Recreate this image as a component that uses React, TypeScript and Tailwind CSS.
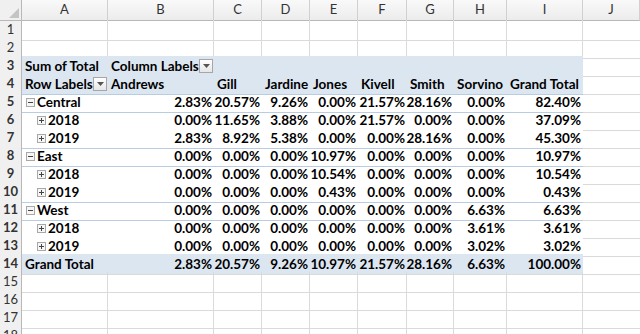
import React from 'react'

const cols = ['A', 'B', 'C', 'D', 'E', 'F', 'G', 'H', 'I', 'J']
const names = ['Andrews', 'Gill', 'Jardine', 'Jones', 'Kivell', 'Smith', 'Sorvino', 'Grand Total']

type Kind = 'region' | 'year' | 'total'
type Line = { label: string; kind: Kind; values: string[]; lineBelow?: boolean }

const lines: Line[] = [
  { label: 'Central', kind: 'region', values: ['2.83%', '20.57%', '9.26%', '0.00%', '21.57%', '28.16%', '0.00%', '82.40%'], lineBelow: true },
  { label: '2018', kind: 'year', values: ['0.00%', '11.65%', '3.88%', '0.00%', '21.57%', '0.00%', '0.00%', '37.09%'] },
  { label: '2019', kind: 'year', values: ['2.83%', '8.92%', '5.38%', '0.00%', '0.00%', '28.16%', '0.00%', '45.30%'], lineBelow: true },
  { label: 'East', kind: 'region', values: ['0.00%', '0.00%', '0.00%', '10.97%', '0.00%', '0.00%', '0.00%', '10.97%'], lineBelow: true },
  { label: '2018', kind: 'year', values: ['0.00%', '0.00%', '0.00%', '10.54%', '0.00%', '0.00%', '0.00%', '10.54%'] },
  { label: '2019', kind: 'year', values: ['0.00%', '0.00%', '0.00%', '0.43%', '0.00%', '0.00%', '0.00%', '0.43%'], lineBelow: true },
  { label: 'West', kind: 'region', values: ['0.00%', '0.00%', '0.00%', '0.00%', '0.00%', '0.00%', '6.63%', '6.63%'], lineBelow: true },
  { label: '2018', kind: 'year', values: ['0.00%', '0.00%', '0.00%', '0.00%', '0.00%', '0.00%', '3.61%', '3.61%'] },
  { label: '2019', kind: 'year', values: ['0.00%', '0.00%', '0.00%', '0.00%', '0.00%', '0.00%', '3.02%', '3.02%'] },
  { label: 'Grand Total', kind: 'total', values: ['2.83%', '20.57%', '9.26%', '10.97%', '21.57%', '28.16%', '6.63%', '100.00%'] },
]

const grid = 'grid grid-cols-[22px_86px_106px_48px_48px_48px_49px_47px_53px_76px_57px]'

function RowNum({ n }: { n: number }) {
  return (
    <div className="flex items-center justify-center bg-[#f0f0f0] border-r border-b border-r-[#b8b8b8] border-b-[#d4d4d4] text-[#333] text-[13px]">
      {n}
    </div>
  )
}

function Blank({ last }: { last?: boolean }) {
  return <div className={last ? 'border-b border-[#dadada]' : 'border-r border-b border-[#dadada]'} />
}

function Dropdown() {
  return (
    <span className="inline-flex w-[14px] h-[14px] items-center justify-center border border-[#a6a6a6] bg-gradient-to-b from-white to-[#e6e6e6]">
      <svg width="7" height="4" viewBox="0 0 7 4">
        <path d="M0 0h7L3.5 4z" fill="#555" />
      </svg>
    </span>
  )
}

function Toggle({ open }: { open: boolean }) {
  return (
    <svg width="9" height="9" viewBox="0 0 9 9" className="shrink-0">
      <rect x="0.5" y="0.5" width="8" height="8" fill="#f6f6f6" stroke="#a8a8a8" />
      <path d="M2 4.5h5" stroke="#444" />
      {!open && <path d="M4.5 2v5" stroke="#444" />}
    </svg>
  )
}

function EmptyRow({ n }: { n: number }) {
  return (
    <div className={`${grid} h-[18px]`}>
      <RowNum n={n} />
      {cols.map((c, i) => (
        <Blank key={c} last={i === cols.length - 1} />
      ))}
    </div>
  )
}

export default function App() {
  return (
    <div className="w-[640px] h-[334px] overflow-hidden bg-white text-black font-['Lato','Liberation_Sans',sans-serif]">
      <div className={`${grid} h-[20px]`}>
        <div className="relative bg-[#f0f0f0] border-r border-b border-[#b8b8b8]">
          <svg width="10" height="10" viewBox="0 0 10 10" className="absolute right-[2px] bottom-[2px]">
            <path d="M10 0v10H0z" fill="#c4c4c4" />
          </svg>
        </div>
        {cols.map((c) => (
          <div
            key={c}
            className="flex items-center justify-center bg-gradient-to-b from-[#f9f9f9] to-[#ececec] border-r border-b border-r-[#d0d0d0] border-b-[#b8b8b8] text-[13px] text-[#333]"
          >
            {c}
          </div>
        ))}
      </div>

      <EmptyRow n={1} />
      <EmptyRow n={2} />

      <div className={`${grid} h-[18px] font-bold text-[13.5px]`}>
        <RowNum n={3} />
        <div className="flex items-center pl-[3px] bg-[#dce6f1] whitespace-nowrap">Sum of Total</div>
        <div className="flex items-center justify-between pl-[3px] pr-[1px] bg-[#dce6f1] whitespace-nowrap">
          Column Labels <Dropdown />
        </div>
        <div className="col-span-7 bg-[#dce6f1]" />
        <Blank last />
      </div>

      <div className={`${grid} h-[18px] font-bold text-[13.5px]`}>
        <RowNum n={4} />
        <div className="flex items-center justify-between pl-[3px] pr-[1px] bg-[#dce6f1] border-b border-[#b8cce4] whitespace-nowrap">
          Row Labels <Dropdown />
        </div>
        {names.map((name) => (
          <div key={name} className="flex items-center pl-[3px] bg-[#dce6f1] border-b border-[#b8cce4] whitespace-nowrap">
            {name}
          </div>
        ))}
        <Blank last />
      </div>

      {lines.map((line, i) => {
        const total = line.kind === 'total'
        const below = line.lineBelow ? 'border-b border-[#b8cce4]' : ''
        const before = i === lines.length - 2 ? 'border-b border-[#95b3d7]' : below
        const bg = total ? 'bg-[#dce6f1] border-b border-[#dadada]' : before
        return (
          <div key={i} className={`${grid} h-[18px] font-bold text-[13.5px]`}>
            <RowNum n={i + 5} />
            <div className={`flex items-center gap-[2px] whitespace-nowrap ${bg} ${line.kind === 'year' ? 'pl-[15px]' : total ? 'pl-[3px]' : 'pl-[4px]'}`}>
              {line.kind === 'region' && <Toggle open />}
              {line.kind === 'year' && <Toggle open={false} />}
              {line.label}
            </div>
            {line.values.map((v, j) => (
              <div key={j} className={`flex items-center justify-end pr-[2px] whitespace-nowrap ${bg}`}>
                {v}
              </div>
            ))}
            <Blank last />
          </div>
        )
      })}

      <EmptyRow n={15} />
      <EmptyRow n={16} />
      <EmptyRow n={17} />
      <EmptyRow n={18} />
    </div>
  )
}
